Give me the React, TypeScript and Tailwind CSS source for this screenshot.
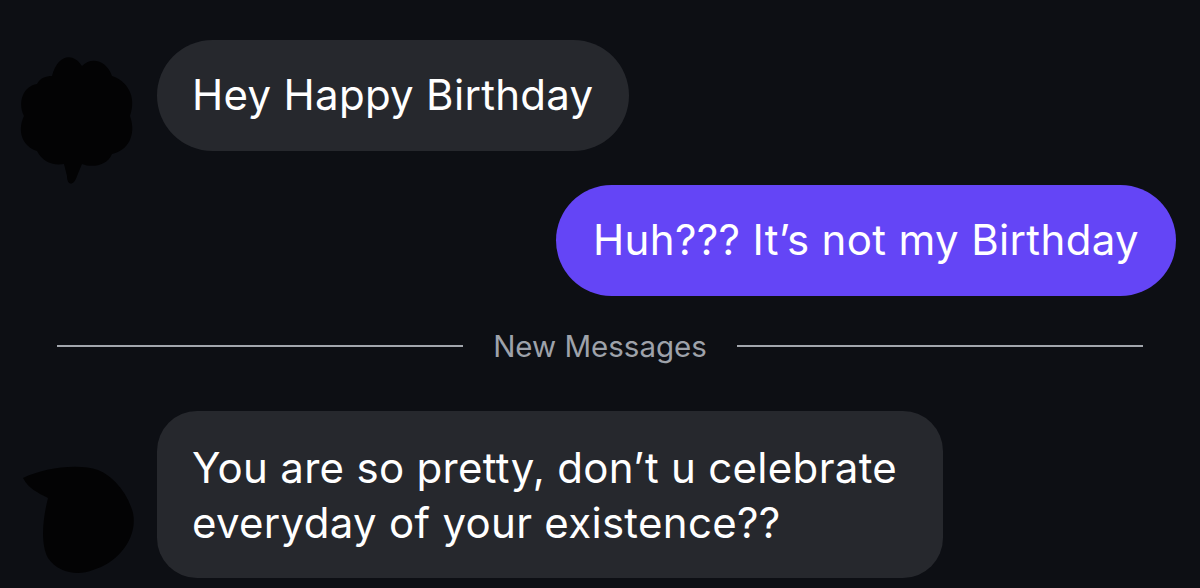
import React from 'react';

const font = { fontFamily: 'Inter, "Noto Sans", sans-serif' };

const Blob = ({ variant }: { variant: 'a' | 'b' }) =>
  variant === 'a' ? (
    <svg width="130" height="150" viewBox="0 0 130 150" className="shrink-0">
      <path
        d="M40 40 C45 20 60 15 70 30 C80 20 95 25 100 40 C115 45 125 60 118 80 C125 100 115 115 100 118 C95 130 80 132 70 128 L65 140 C62 150 55 150 55 140 L52 128 C40 130 30 125 25 115 C10 110 5 95 12 80 C5 65 12 50 25 48 C28 42 34 40 40 40 Z"
        fill="#030304"
      />
    </svg>
  ) : (
    <svg width="140" height="120" viewBox="0 0 140 120" className="shrink-0">
      <path
        d="M15 20 C35 10 70 5 90 12 C105 18 120 35 125 55 C130 80 110 105 85 112 C70 118 50 115 40 100 C32 85 35 60 40 40 C30 35 20 30 15 20 Z"
        fill="#030304"
      />
    </svg>
  );

export default function App() {
  return (
    <div className="w-[1200px] h-[588px] bg-[#0d0f14] overflow-hidden flex flex-col text-white" style={font}>
      {/* first incoming */}
      <div className="flex items-center mt-[40px] h-[111px]">
        <div className="w-[157px] flex justify-start pl-[12px] pt-[30px]">
          <Blob variant="a" />
        </div>
        <div className="h-[111px] rounded-full bg-[#26282d] px-[35px] pb-[3px] flex items-center text-[42px] tracking-[0.3px]">
          Hey Happy Birthday
        </div>
      </div>

      {/* outgoing */}
      <div className="flex justify-end pr-[24px] mt-[34px]">
        <div className="h-[111px] rounded-full bg-[#6445f6] px-[37px] pb-[3px] flex items-center text-[42px] tracking-[0.35px]">
          Huh??? It’s not my Birthday
        </div>
      </div>

      {/* divider */}
      <div className="flex items-center px-[57px] mt-[26px] h-[48px]">
        <div className="flex-1 h-[2px] bg-[#a2a6ad]" />
        <span className="px-[30px] text-[29.5px] text-[#9ea2aa]">New Messages</span>
        <div className="flex-1 h-[2px] bg-[#a2a6ad]" />
      </div>

      {/* second incoming */}
      <div className="flex items-end mt-[41px]">
        <div className="w-[157px] flex justify-start pl-[8px]">
          <Blob variant="b" />
        </div>
        <div className="h-[167px] rounded-[40px] bg-[#26282d] pl-[35px] pr-[46px] flex flex-col justify-center text-[42px] leading-[55px] tracking-[0.3px]">
          <span>You are so pretty, don’t u celebrate</span>
          <span>everyday of your existence??</span>
        </div>
      </div>
    </div>
  );
}
